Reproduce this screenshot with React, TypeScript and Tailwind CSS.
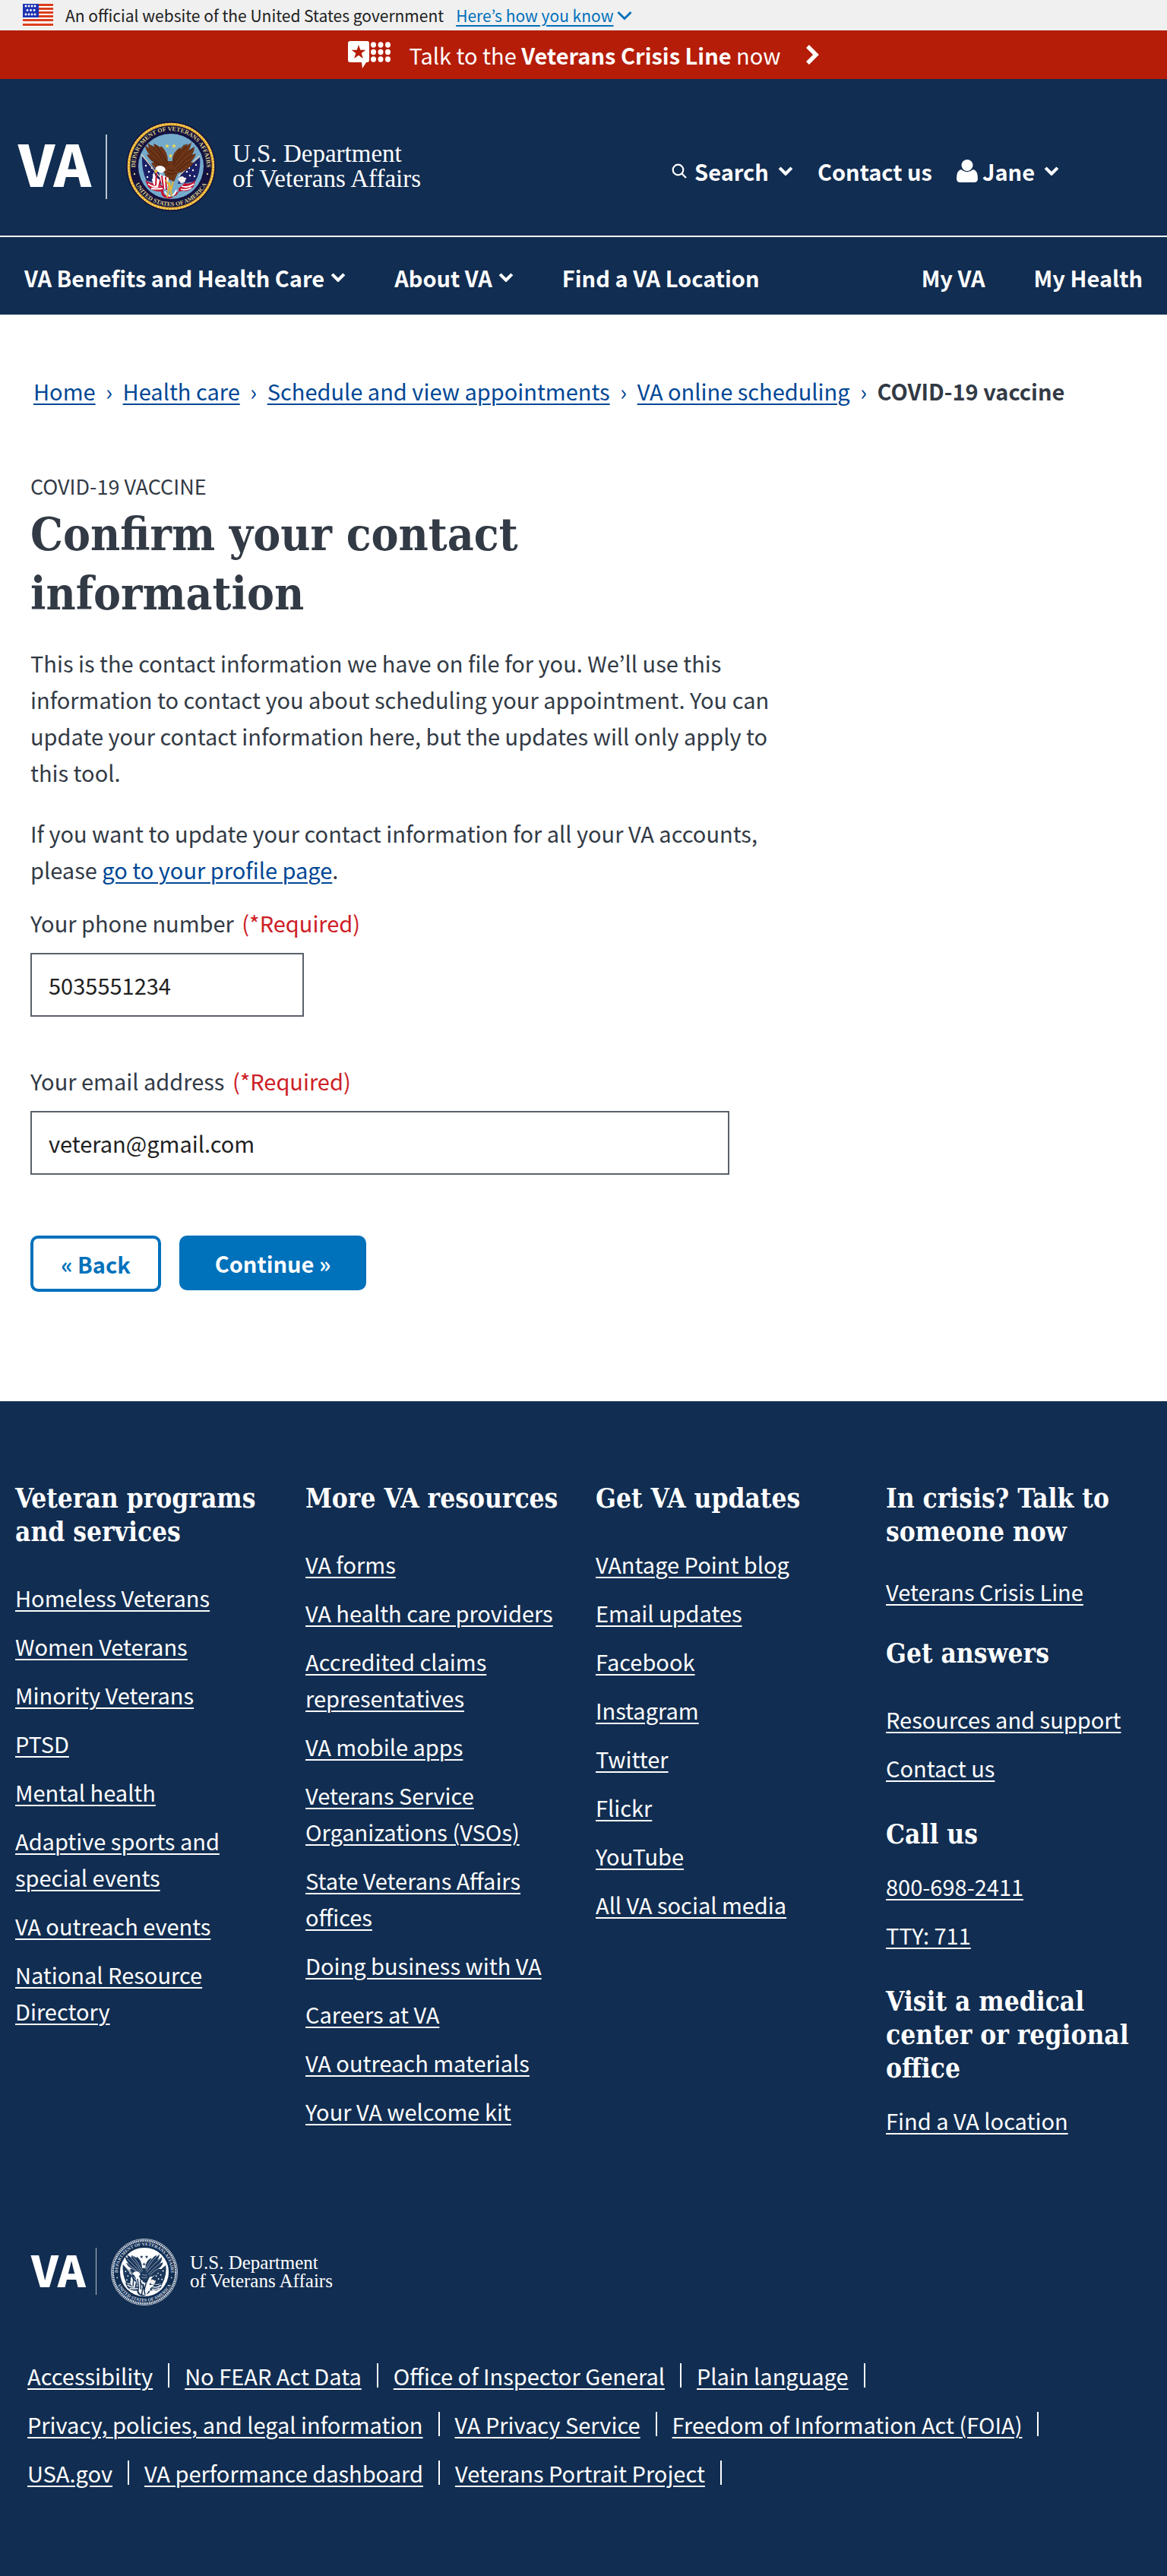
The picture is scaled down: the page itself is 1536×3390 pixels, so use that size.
import type { ReactNode } from "react";

const sans = "font-['Noto_Sans_CJK_KR',sans-serif]";
const slab = "font-['DejaVu_Serif_Condensed','DejaVu_Serif',serif]";

function Chevron({ className = "w-5 h-3", width = 4.5 }: { className?: string; width?: number }) {
  return (
    <svg viewBox="0 0 20 13" className={className} fill="none" stroke="currentColor" strokeWidth={width} aria-hidden="true">
      <path d="M1.5 2 10 10.5 18.5 2" />
    </svg>
  );
}

function Flag() {
  return (
    <svg viewBox="0 0 40 30" className="h-[30px] w-10" aria-label="U.S. flag" role="img">
      <rect width="40" height="30" fill="#fff" />
      {[0, 5, 10, 15, 20, 26].map((y) => (
        <rect key={y} y={y} width="40" height="3" fill="#db3e1f" />
      ))}
      <rect width="21" height="18" fill="#1e33b1" />
      {[3, 8.5, 14].map((y, row) =>
        (row === 1 ? [6, 10.5, 15] : [4, 8, 12, 16]).map((x) => (
          <circle key={`${x}-${y}`} cx={x} cy={y} r="1.4" fill="#fff" />
        )),
      )}
    </svg>
  );
}

function CrisisIcon() {
  return (
    <svg viewBox="0 0 56 36" className="h-9 w-14" fill="#fff" aria-hidden="true">
      <path d="M3 0h22q3 0 3 3v22q0 3-3 3h-1l-5 8-1-8H3q-3 0-3-3V3q0-3 3-3Z" />
      <path d="m14 5 2.3 6.8h7.1L17.700 16l2.200 6.900L14 18.700l-5.900 4.200L10.300 16l-5.700-4.200h7.100Z" fill="#b51d09" />
      {[5, 14.5, 24].map((y) =>
        [33.5, 43, 52.5].map((x) => <ellipse key={`${x}-${y}`} cx={x} cy={y} rx="3.5" ry="3.7" />),
      )}
    </svg>
  );
}

const star = "M0-3 .8-.9 3-.9 1.200.5 1.900 2.700 0 1.400-1.900 2.700-1.200.5-3-.9-.8-.9Z";
const starSpots = [
  [54, 32],
  [63, 32],
  [50, 40],
  [67, 40],
  [58.5, 45],
];
const leftFeathers = [
  "M29 36 Q38 44 52 60",
  "M29 44 Q38 50 50 61",
  "M32 50 Q40 54 50 62",
  "M33 31 Q44 42 54 59",
  "M38 30 Q46 40 56 57",
];
const rightFeathers = [
  "M88 35 Q78 42 63 60",
  "M88 43 Q78 50 66 63",
  "M87 51 Q78 55 68 65",
  "M83 30 Q72 38 62 57",
  "M77 30 Q70 36 61 54",
];

function Seal({ id, mono = false, className }: { id: string; mono?: boolean; className: string }) {
  const navy = mono ? "#112d51" : "#14123f";
  const gold = mono ? "#e8ecf2" : "#e3a92b";
  const letters = mono ? "#d5dce6" : "#d9cd8a";
  const field = mono ? "#fff" : "#74abcd";
  const brown = mono ? "#1b375b" : "#6d3517";
  const dark = mono ? "#dfe5ee" : "#3d1a0b";
  const blue = mono ? "#1b375b" : "#1c2166";
  const red = mono ? "#1b375b" : "#c4122f";
  return (
    <svg viewBox="0 0 118 118" className={className} role="img" aria-label="Department of Veterans Affairs seal">
      <defs>
        <path id={`${id}-top`} d="M12.5 66A47 47 0 1 1 105.500 66" />
        <path id={`${id}-bottom`} d="M7 66A52.500 52.500 0 0 0 111 66" />
        <clipPath id={`${id}-clip`}>
          <circle cx="59" cy="59" r="43" />
        </clipPath>
      </defs>
      <circle cx="59" cy="59" r="58.5" fill={navy} stroke={mono ? gold : navy} strokeWidth="1" />
      <circle cx="59" cy="59" r="55.5" fill="none" stroke={gold} strokeWidth="3.5" strokeDasharray={mono ? "2 1.2" : undefined} />
      {!mono && <circle cx="59" cy="59" r="56" fill="none" stroke="#f8e27d" strokeWidth="1.5" strokeDasharray="2 2" />}
      <circle cx="59" cy="59" r="43" fill={field} />
      <g className="font-['Liberation_Serif',serif] text-[8px] font-bold" fill={letters} textAnchor="middle">
        <text>
          <textPath href={`#${id}-top`} startOffset="50%">DEPARTMENT OF VETERANS AFFAIRS</textPath>
        </text>
        <text>
          <textPath href={`#${id}-bottom`} startOffset="50%">UNITED STATES OF AMERICA</textPath>
        </text>
      </g>
      <circle cx="11" cy="69" r="1.2" fill={letters} />
      <circle cx="107" cy="69" r="1.2" fill={letters} />
      <g clipPath={`url(#${id}-clip)`}>
        {starSpots.map(([x, y]) => (
          <path key={`${x}-${y}`} d={star} transform={`translate(${x} ${y})`} fill={mono ? navy : "#f3d64e"} />
        ))}
        <path d="M21 45 Q20 64 27 78 L48 82 L43 67Z" fill={blue} />
        <path d="M97 47 Q99 64 91 79 L68 82 L73 66Z" fill={blue} />
        {[
          [26, 58], [30, 66], [34, 61], [28, 73], [36, 70], [35, 77],
          [92, 57], [88, 64], [83, 61], [90, 72], [84, 71], [80, 66], [78, 75],
        ].map(([x, y]) => (
          <circle key={`${x}-${y}`} cx={x} cy={y} r="1.2" fill="#fff" />
        ))}
        <path d="M25 77 Q33 83 42 80 L50 87 Q46 97 57 99 L61 99 Q70 97 69 88 L77 81 Q85 83 91 77 L89 85 Q83 93 75 91 L66 93 Q62 103 55 101 Q46 100 46 92 Q34 92 29 86Z" fill={red} />
        <path d="M29 82Q37 88 45 85M33 88Q41 89 48 88M73 85Q81 88 89 82M72 89Q79 91 86 87M51 92Q53 97 58 98M66 90Q65 95 61 97" fill="none" stroke="#fff" strokeWidth="1.8" />
        <path d="M20 43 46 75M97 45 69 72" stroke={mono ? "#fff" : "#e6d9b6"} strokeWidth="1.2" />
        <path d="M28 27 Q32 32 37 33 L36 29 Q42 31 45 34 L46 32 Q55 40 55 52 L61 52 Q60 41 71 34 L72 37 Q75 31 81 29 L80 33 L86 27 Q85 34 82 38 L90 33 Q90 40 86 44 L92 42 Q90 50 84 53 L89 54 Q81 65 68 68 L63 79 L53 75 L50 67 Q36 63 33 54 L37 54 Q29 49 27 43 L31 44 Q25 37 25 31 L30 35Z" fill={brown} />
        <g fill="none" stroke={dark} strokeWidth="0.8">
          {[...leftFeathers, ...rightFeathers].map((d) => (
            <path key={d} d={d} />
          ))}
          <path d="M55 63Q59 66 64 64M54 68Q59 71 64 68" />
        </g>
        <path d="M37 66 Q37 73 45 77 L43 87 L36 83 Q33 75 37 66Z" fill="#fff" />
        <path d="M40 68 39 84M46 72 43 87" stroke={red} strokeWidth="2" />
        <path d="M44 69 56 74 54 91 Q46 87 44 69Z" fill="#fff" />
        <path d="M47 71 49 87M52 73 53 90" stroke={red} strokeWidth="2" />
        <path d="M39 65 Q37 59 44 58 Q51 58 52 64 L47 68Z" fill="#fff" />
        <path d="M39 63 Q36 65 38 68 L42 65Z" fill={mono ? navy : "#e8b32e"} />
        <path d="M68 76 Q74 68 78 76 Q79 81 72 81Z" fill="#f2f0ee" />
        <path d="M52 77 57 84 54 100M57 80 60 98M62 79 59 90" fill="none" stroke={mono ? navy : "#e8b32e"} strokeWidth="2" />
      </g>
    </svg>
  );
}

function HeaderBrand() {
  return (
    <a href="#home" className="flex items-center font-normal" aria-label="VA home">
      <svg viewBox="0 0 120 118" className="h-[118px] w-[120px] overflow-visible" aria-hidden="true">
        <text x="2" y="86" fill="#fff" className="font-['Noto_Sans_CJK_KR',sans-serif] text-[75px] font-black">VA</text>
        <rect x="117" y="17" width="2" height="85" fill="#b9c3d0" />
      </svg>
      <Seal id="head" className="ml-6 size-[118px]" />
      <span className="ml-[22px] font-['Liberation_Serif',serif] text-[33px] leading-[33px] text-white">
        U.S. Department
        <br />
        of Veterans Affairs
      </span>
    </a>
  );
}

function FooterBrand() {
  return (
    <a href="#home" className="flex items-center" aria-label="VA home">
      <svg viewBox="0 0 88 88" className="size-[88px] overflow-visible" aria-hidden="true">
        <text x="1" y="64" fill="#fff" className="font-['Noto_Sans_CJK_KR',sans-serif] text-[56px] font-black">VA</text>
        <rect x="86" y="12" width="1" height="62" fill="#b9c3d0" />
      </svg>
      <Seal id="foot" mono className="ml-[18px] size-[88px]" />
      <span className="ml-4 font-['Liberation_Serif',serif] text-[25px] leading-6 text-white">
        U.S. Department
        <br />
        of Veterans Affairs
      </span>
    </a>
  );
}

function FooterLink({ children }: { children: ReactNode }) {
  return (
    <a href="#link" className="underline decoration-2 underline-offset-4">
      {children}
    </a>
  );
}

function LinkList({ items, className = "" }: { items: string[]; className?: string }) {
  return (
    <ul className={`flex flex-col gap-4 ${className}`}>
      {items.map((item) => (
        <li key={item}>
          <FooterLink>{item}</FooterLink>
        </li>
      ))}
    </ul>
  );
}

function FooterHeading({ children, className = "" }: { children: ReactNode; className?: string }) {
  return <h2 className={`${slab} text-[35px] leading-[44px] font-bold ${className}`}>{children}</h2>;
}

const programs = [
  "Homeless Veterans",
  "Women Veterans",
  "Minority Veterans",
  "PTSD",
  "Mental health",
  "Adaptive sports and special events",
  "VA outreach events",
  "National Resource Directory",
];
const resources = [
  "VA forms",
  "VA health care providers",
  "Accredited claims representatives",
  "VA mobile apps",
  "Veterans Service Organizations (VSOs)",
  "State Veterans Affairs offices",
  "Doing business with VA",
  "Careers at VA",
  "VA outreach materials",
  "Your VA welcome kit",
];
const updates = [
  "VAntage Point blog",
  "Email updates",
  "Facebook",
  "Instagram",
  "Twitter",
  "Flickr",
  "YouTube",
  "All VA social media",
];
const legal = [
  ["Accessibility", "No FEAR Act Data", "Office of Inspector General", "Plain language"],
  ["Privacy, policies, and legal information", "VA Privacy Service", "Freedom of Information Act (FOIA)"],
  ["USA.gov", "VA performance dashboard", "Veterans Portrait Project"],
];
const crumbs = ["Home", "Health care", "Schedule and view appointments", "VA online scheduling"];

export default function App() {
  return (
    <div className={`${sans} bg-white text-[29px] leading-[48px] text-[#323a45]`}>
      <div className="flex h-10 items-center bg-[#f0f0f0] pl-[30px] text-[21px] leading-10 text-[#212121]">
        <Flag />
        <span className="ml-4">An official website of the United States government</span>
        <button type="button" className="ml-4 flex items-center text-[#0071bb]">
          <span className="underline decoration-2 underline-offset-4">Here’s how you know</span>
          <Chevron className="ml-1 h-[13px] w-5" width={3} />
        </button>
      </div>

      <a href="#crisis" className="flex h-16 items-center justify-center bg-[#b51d09] leading-[64px] text-white">
        <CrisisIcon />
        <span className="ml-6">
          Talk to the <b>Veterans Crisis Line</b> now
        </span>
        <svg viewBox="0 0 18 28" className="ml-8 h-7 w-[18px]" fill="none" stroke="#fff" strokeWidth="5.5" aria-hidden="true">
          <path d="M3 3 14 14 3 25" />
        </svg>
      </a>

      <header className="bg-[#112d51] font-bold text-white">
        <div className="flex h-52 items-center justify-between border-b-2 border-white pt-6 pr-[142px] pl-[22px]">
          <HeaderBrand />
          <div className="flex items-center gap-8 pt-3">
            <button type="button" className="flex items-center">
              <svg viewBox="0 0 20 20" className="mr-[10px] size-5" fill="none" stroke="currentColor" strokeWidth="2.2" aria-hidden="true">
                <circle cx="8.5" cy="8.5" r="6.8" />
                <path d="m13.5 13.5 5.500 5.500" />
              </svg>
              Search
              <Chevron className="ml-3 h-3 w-5" />
            </button>
            <a href="#contact">Contact us</a>
            <button type="button" className="flex items-center">
              <svg viewBox="0 0 28 30" className="mr-[6px] h-[30px] w-7" fill="currentColor" aria-hidden="true">
                <ellipse cx="14" cy="7.5" rx="7.5" ry="7.5" />
                <path d="M6 13q8 6.500 16 0 6 1.500 6 12 0 5-5 5H5q-5 0-5-5Q0 14.500 6 13Z" />
              </svg>
              Jane
              <Chevron className="ml-3 h-3 w-5" />
            </button>
          </div>
        </div>
        <nav className="flex h-[102px] items-center gap-16 px-8 pt-1" aria-label="Main">
          <button type="button" className="flex items-center gap-2">
            VA Benefits and Health Care <Chevron />
          </button>
          <button type="button" className="flex items-center gap-2">
            About VA <Chevron />
          </button>
          <a href="#locations">Find a VA Location</a>
          <a href="#my-va" className="ml-auto">My VA</a>
          <a href="#my-health">My Health</a>
        </nav>
      </header>

      <main>
        <nav aria-label="Breadcrumb" className="px-11 pt-[76px]">
          <ol className="flex text-[#004795]">
            {crumbs.map((crumb) => (
              <li key={crumb} className="flex">
                <a href="#crumb" className="underline decoration-2 underline-offset-4">{crumb}</a>
                <span className="w-9 text-center" aria-hidden="true">›</span>
              </li>
            ))}
            <li className="font-bold text-[#323a45]" aria-current="page">COVID-19 vaccine</li>
          </ol>
        </nav>

        <form className="max-w-[1024px] pt-[78px] pb-36 pl-10" onSubmit={(e) => e.preventDefault()}>
          <p className="text-[27px]">COVID-19 VACCINE</p>
          <h1 className={`${slab} max-w-[900px] text-[60px] leading-[78px] font-bold`}>Confirm your contact information</h1>
          <p className="mt-7">
            This is the contact information we have on file for you. We’ll use this information to contact you about
            scheduling your appointment. You can update your contact information here, but the updates will only apply to
            this tool.
          </p>
          <p className="mt-8">
            If you want to update your contact information for all your VA accounts, please{" "}
            <a href="#profile" className="text-[#004795] underline decoration-2 underline-offset-4">go to your profile page</a>.
          </p>

          <label htmlFor="phone" className="mt-[22px] block">
            Your phone number <span className="ml-1 text-[#cd2026]">(*Required)</span>
          </label>
          <input
            id="phone"
            type="tel"
            defaultValue="5035551234"
            className="mt-4 block h-[84px] w-[360px] border-2 border-[#5b616b] px-[22px] text-[#212121]"
          />
          <label htmlFor="email" className="mt-[60px] block">
            Your email address <span className="ml-1 text-[#cd2026]">(*Required)</span>
          </label>
          <input
            id="email"
            type="email"
            defaultValue="veteran@gmail.com"
            className="mt-4 block h-[84px] w-[920px] border-2 border-[#5b616b] px-[22px] text-[#212121]"
          />

          <div className="mt-20 flex gap-6 font-bold">
            <button type="button" className="h-[74px] w-[172px] rounded-[10px] border-4 border-[#0071bb] text-[#0071bb]">
              « Back
            </button>
            <button type="submit" className="h-[72px] w-[246px] rounded-[10px] bg-[#0071bb] text-white">
              Continue »
            </button>
          </div>
        </form>
      </main>

      <footer className="bg-[#112d51] pt-[106px] pb-28 text-white">
        <div className="grid grid-cols-4 gap-x-8 px-5">
          <section>
            <FooterHeading>Veteran programs and services</FooterHeading>
            <LinkList items={programs} className="mt-10" />
          </section>
          <section>
            <FooterHeading>More VA resources</FooterHeading>
            <LinkList items={resources} className="mt-10" />
          </section>
          <section>
            <FooterHeading>Get VA updates</FooterHeading>
            <LinkList items={updates} className="mt-10" />
          </section>
          <section>
            <FooterHeading>In crisis? Talk to someone now</FooterHeading>
            <LinkList items={["Veterans Crisis Line"]} className="mt-8" />
            <FooterHeading className="mt-9">Get answers</FooterHeading>
            <LinkList items={["Resources and support", "Contact us"]} className="mt-10" />
            <FooterHeading className="mt-[42px]">Call us</FooterHeading>
            <LinkList items={["800-698-2411", "TTY: 711"]} className="mt-[22px]" />
            <FooterHeading className="mt-[42px]">Visit a medical center or regional office</FooterHeading>
            <LinkList items={["Find a VA location"]} className="mt-[22px]" />
          </section>
        </div>

        <div className="mt-[132px] pl-10">
          <FooterBrand />
        </div>

        <div className="mt-[68px] flex flex-col gap-4 px-9">
          {legal.map((row) => (
            <ul key={row[0]} className="flex flex-wrap gap-5">
              {row.map((item) => (
                <li key={item} className="flex items-center gap-5">
                  <FooterLink>{item}</FooterLink>
                  <span className="h-8 w-[2px] bg-white" />
                </li>
              ))}
            </ul>
          ))}
        </div>
      </footer>
    </div>
  );
}
